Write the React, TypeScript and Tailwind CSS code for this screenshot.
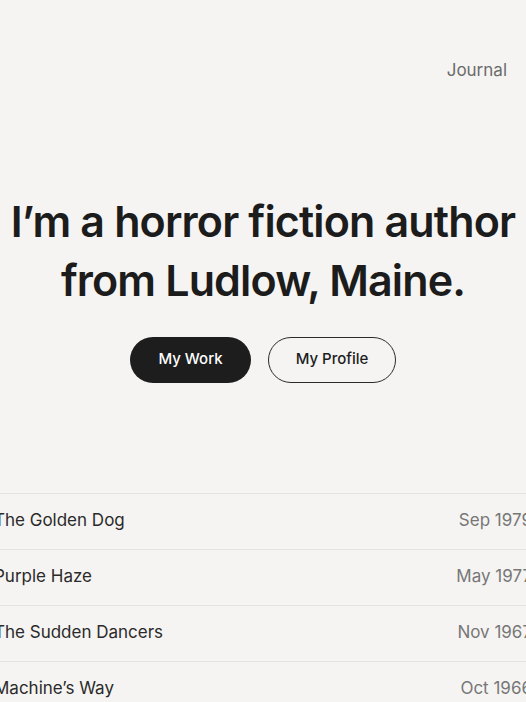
export default function App() {
  const items = [
    ["The Golden Dog", "Sep 1979"],
    ["Purple Haze", "May 1977"],
    ["The Sudden Dancers", "Nov 1967"],
    ["Machine’s Way", "Oct 1966"],
  ];
  return (
    <div
      className="w-[526px] h-[702px] overflow-hidden bg-[#f5f4f2] text-[#1c1c1c]"
      style={{ fontFamily: "Inter, 'Noto Sans', sans-serif" }}
    >
      <header className="flex justify-end pt-[58px] pr-[19px]">
        <span className="text-[17px] text-[#6b6b6b]">Journal</span>
      </header>
      <section className="mt-[108px] flex flex-col items-center">
        <h1 className="text-center text-[43px] leading-[59px] font-semibold tracking-[-0.02em] whitespace-nowrap">
          I’m a horror fiction author
          <br />
          from Ludlow, Maine.
        </h1>
        <div className="mt-[27px] flex gap-[17px]">
          <button className="h-[46px] w-[121px] rounded-full bg-[#1d1d1d] text-[15px] font-medium text-white">
            My Work
          </button>
          <button className="h-[46px] w-[128px] rounded-full border-[1.5px] border-[#2a2a2a] text-[15px] font-medium text-[#1d1d1d]">
            My Profile
          </button>
        </div>
      </section>
      <ul className="mt-[110px] -mx-[6px] border-t border-[#e3e2df]">
        {items.map(([t, d]) => (
          <li
            key={t}
            className="flex h-[56px] items-center justify-between border-b border-[#e3e2df] text-[17px]"
          >
            <span className="text-[#2a2a2a]">{t}</span>
            <span className="text-[#777]">{d}</span>
          </li>
        ))}
      </ul>
    </div>
  );
}
